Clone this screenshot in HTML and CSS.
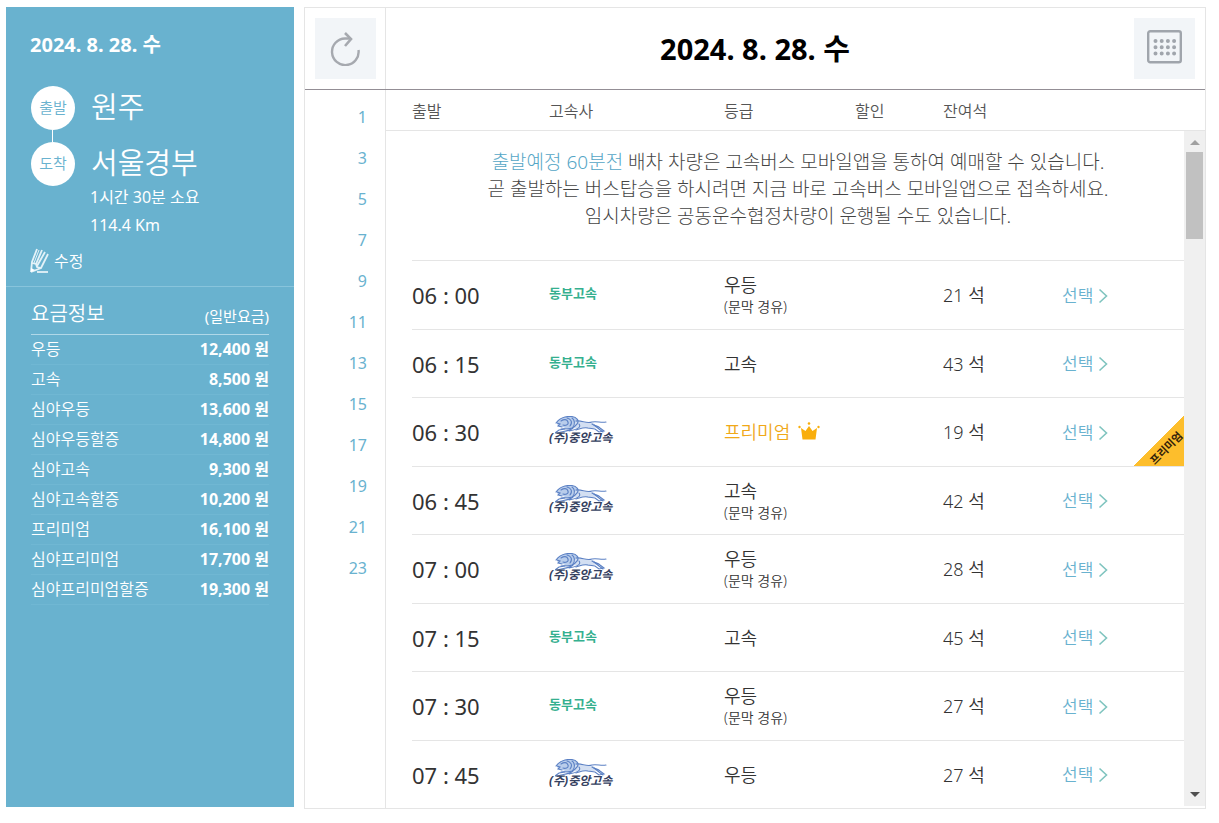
FILE: index.html
```html
<!DOCTYPE html>
<html lang="ko">
<head>
    <meta charset="UTF-8">
    <meta name="viewport" content="width=device-width, initial-scale=1.0">
    <title>고속버스 배차조회</title>
    <link rel="stylesheet" href="styles.css">
</head>
<body>
    <!-- shared icons -->
    <svg class="defs" width="0" height="0">
        <symbol id="chevron" viewBox="0 0 10 16">
            <path d="M1.5 1.5L8.5 8L1.5 14.5" fill="none" stroke="#7fc4bf" stroke-width="1.6"/>
        </symbol>
        <symbol id="lion" viewBox="0 0 52 18">
            <path d="M2 6C4 1 12 0 19 1C23 2 24 6 21 9C18 13 11 13 8 11L4 10L2 8Z" fill="#b9cdeb"/>
            <path d="M19 7C25 4 31 8 38 7L43 11L34 13C28 10 24 13 17 12Z" fill="#d3dff2"/>
            <g fill="none" stroke="#5b80c4" stroke-width="1.1" stroke-linecap="round">
                <path d="M1 7C4 3 6 2 10 1C14 0 20 0 22 3C25 6 21 10 17 12C13 14 9 12 6 13"/>
                <path d="M2 7L5 8L3 10L7 11M6 5C9 3 12 3 13 6S10 10 8 9M12 2C16 3 18 6 15 10M17 2C20 4 20 8 18 11"/>
                <path d="M21 5C27 4 31 8 37 6C42 5 46 7 51 6"/>
                <path d="M37 8C40 10 43 10 45 12L49 15L44 16L40 13L33 12C28 11 25 13 21 14"/>
                <path d="M18 12C13 16 7 15 3 17L0 17L4 14L10 13M24 8C27 12 20 14 14 15"/>
                <path d="M39 9L44 13L48 16"/>
            </g>
        </symbol>
    </svg>

    <div class="wrap">
        <aside class="side">
            <div class="trip">
                <p class="trip-date">2024. 8. 28. 수</p>
                <dl class="route">
                    <dt class="start">출발</dt>
                    <dd>원주</dd>
                    <dt>도착</dt>
                    <dd>서울경부</dd>
                </dl>
                <p class="info">1시간 30분 소요<br>114.4 Km</p>
                <button type="button" class="edit">
                    <svg width="19" height="25" viewBox="0 0 19 25">
                        <g fill="none" stroke="#e4f2f8" stroke-width="1.8">
                            <path d="M1 24L2 14L7 1M1 24L11 20L18 6M2 15L6 16L7 19L11 20M6 16L12 2M7 18L15 4"/>
                            <path d="M4 15L9 2" stroke-width="1"/>
                            <path d="M7 24H18"/>
                        </g>
                        <path d="M1 24L1 20L5 22Z" fill="#fff"/>
                    </svg>
                    <span>수정</span>
                </button>
            </div>
            <table class="fare">
                <thead>
                    <tr><th>요금정보</th><td>(일반요금)</td></tr>
                </thead>
                <tbody>
                    <tr><th>우등</th><td>12,400 원</td></tr>
                    <tr><th>고속</th><td>8,500 원</td></tr>
                    <tr><th>심야우등</th><td>13,600 원</td></tr>
                    <tr><th>심야우등할증</th><td>14,800 원</td></tr>
                    <tr><th>심야고속</th><td>9,300 원</td></tr>
                    <tr><th>심야고속할증</th><td>10,200 원</td></tr>
                    <tr><th>프리미엄</th><td>16,100 원</td></tr>
                    <tr><th>심야프리미엄</th><td>17,700 원</td></tr>
                    <tr><th>심야프리미엄할증</th><td>19,300 원</td></tr>
                </tbody>
            </table>
        </aside>

        <main class="board">
            <header class="top">
                <div class="refresh">
                    <button type="button" class="icon-btn" aria-label="새로고침">
                        <svg width="30" height="34" viewBox="0 0 30 34">
                            <path d="M28.5 18A13.3 13.3 0 1 1 15 6.5H20" fill="none" stroke="#a6a9af" stroke-width="2.4"/>
                            <path d="M15 1L21 7L15 14" fill="none" stroke="#a6a9af" stroke-width="2.6"/>
                        </svg>
                    </button>
                </div>
                <h1>2024. 8. 28. 수</h1>
                <button type="button" class="icon-btn calendar" aria-label="날짜 선택">
                    <svg width="35" height="34" viewBox="0 0 35 34">
                        <rect x="1.2" y="1.2" width="32.6" height="31" rx="2" fill="none" stroke="#a0a5ac" stroke-width="2.4"/>
                        <path d="M8.5 11H28M8.5 17.2H28M8.5 23.4H28" fill="none" stroke="#a0a5ac" stroke-width="4" stroke-linecap="round" stroke-dasharray="0 6.2"/>
                    </svg>
                </button>
            </header>

            <div class="content">
                <nav class="hours">
                    <a href="#">1</a>
                    <a href="#">3</a>
                    <a href="#">5</a>
                    <a href="#">7</a>
                    <a href="#">9</a>
                    <a href="#">11</a>
                    <a href="#">13</a>
                    <a href="#">15</a>
                    <a href="#">17</a>
                    <a href="#">19</a>
                    <a href="#">21</a>
                    <a href="#">23</a>
                </nav>

                <table class="list">
                    <thead>
                        <tr><th>출발</th><th>고속사</th><th>등급</th><th>할인</th><th>잔여석</th><th></th></tr>
                    </thead>
                    <tbody class="notice">
                        <tr>
                            <td colspan="6"><em>출발예정 60분전</em> 배차 차량은 고속버스 모바일앱을 통하여 예매할 수 있습니다.<br>곧 출발하는 버스탑승을 하시려면 지금 바로 고속버스 모바일앱으로 접속하세요.<br>임시차량은 공동운수협정차량이 운행될 수도 있습니다.</td>
                        </tr>
                    </tbody>
                    <tbody class="buses">
                        <tr>
                            <td class="time">06 : 00</td>
                            <td><span class="dongbu">동부고속</span></td>
                            <td>우등<small>(문막 경유)</small></td>
                            <td></td>
                            <td>21 석</td>
                            <td><a href="#">선택<svg width="10" height="16"><use href="#chevron"/></svg></a></td>
                        </tr>
                        <tr>
                            <td class="time">06 : 15</td>
                            <td><span class="dongbu">동부고속</span></td>
                            <td>고속</td>
                            <td></td>
                            <td>43 석</td>
                            <td><a href="#">선택<svg width="10" height="16"><use href="#chevron"/></svg></a></td>
                        </tr>
                        <tr>
                            <td class="time">06 : 30</td>
                            <td><span class="jungang"><svg width="52" height="18"><use href="#lion"/></svg>(주)중앙고속</span></td>
                            <td class="grade">프리미엄
                                <svg width="22" height="18" viewBox="0 0 22 18">
                                    <path d="M3 6L7.5 9L11 4L14.5 9L19 6L17.5 17.5H4.5Z" fill="#f9ae0c"/>
                                    <circle cx="1.5" cy="5" r="1.2" fill="#f9ae0c"/>
                                    <circle cx="11" cy="1.5" r="1.3" fill="#f9ae0c"/>
                                    <circle cx="20.5" cy="5" r="1.2" fill="#f9ae0c"/>
                                </svg>
                            </td>
                            <td></td>
                            <td>19 석</td>
                            <td><a href="#">선택<svg width="10" height="16"><use href="#chevron"/></svg></a><span class="ribbon"><b>프리미엄</b></span></td>
                        </tr>
                        <tr>
                            <td class="time">06 : 45</td>
                            <td><span class="jungang"><svg width="52" height="18"><use href="#lion"/></svg>(주)중앙고속</span></td>
                            <td>고속<small>(문막 경유)</small></td>
                            <td></td>
                            <td>42 석</td>
                            <td><a href="#">선택<svg width="10" height="16"><use href="#chevron"/></svg></a></td>
                        </tr>
                        <tr>
                            <td class="time">07 : 00</td>
                            <td><span class="jungang"><svg width="52" height="18"><use href="#lion"/></svg>(주)중앙고속</span></td>
                            <td>우등<small>(문막 경유)</small></td>
                            <td></td>
                            <td>28 석</td>
                            <td><a href="#">선택<svg width="10" height="16"><use href="#chevron"/></svg></a></td>
                        </tr>
                        <tr>
                            <td class="time">07 : 15</td>
                            <td><span class="dongbu">동부고속</span></td>
                            <td>고속</td>
                            <td></td>
                            <td>45 석</td>
                            <td><a href="#">선택<svg width="10" height="16"><use href="#chevron"/></svg></a></td>
                        </tr>
                        <tr>
                            <td class="time">07 : 30</td>
                            <td><span class="dongbu">동부고속</span></td>
                            <td>우등<small>(문막 경유)</small></td>
                            <td></td>
                            <td>27 석</td>
                            <td><a href="#">선택<svg width="10" height="16"><use href="#chevron"/></svg></a></td>
                        </tr>
                        <tr>
                            <td class="time">07 : 45</td>
                            <td><span class="jungang"><svg width="52" height="18"><use href="#lion"/></svg>(주)중앙고속</span></td>
                            <td>우등</td>
                            <td></td>
                            <td>27 석</td>
                            <td><a href="#">선택<svg width="10" height="16"><use href="#chevron"/></svg></a></td>
                        </tr>
                    </tbody>
                </table>

                <div class="scroll">
                    <div class="bar">
                        <i class="up"></i>
                        <i class="thumb"></i>
                        <i class="down"></i>
                    </div>
                </div>
            </div>
        </main>
    </div>
</body>
</html>
```
FILE: styles.css
```css
* {
    box-sizing: border-box;
}
body {
    margin: 7px 13px 0 6px;
    font-family: "Noto Sans", "Noto Sans CJK KR", sans-serif;
    font-size: 16px;
    color: #333;
    background: #fff;
}
h1, p, dl, dd {
    margin: 0;
}
a {
    color: #69b2cf;
    text-decoration: none;
}
button {
    border: 0;
    padding: 0;
    font: inherit;
    cursor: pointer;
}
table {
    border-collapse: collapse;
}
th {
    font-weight: normal;
    text-align: left;
}
.defs {
    position: absolute;
}
.wrap {
    display: flex;
    gap: 10px;
}

/* left summary */
.side {
    flex: 0 0 288px;
    margin-bottom: 2px;
    color: #fff;
    background: #69b2cf;
}
.trip {
    height: 280px;
    padding: 24px 24px 0;
    border-bottom: 1px solid #88c4dc;
}
.trip-date {
    font-size: 20px;
    line-height: 28px;
    font-weight: bold;
}
.route {
    display: grid;
    grid-template-columns: 44px 1fr;
    column-gap: 16px;
    row-gap: 12px;
    margin-top: 27px;
    padding-left: 1px;
}
.route dt {
    position: relative;
    height: 44px;
    border-radius: 50%;
    line-height: 42px;
    text-align: center;
    font-size: 15px;
    font-weight: 350;
    color: #69b2cf;
    background: #fff;
}
.route .start::after {
    content: "";
    position: absolute;
    left: 21px;
    top: 44px;
    width: 1px;
    height: 12px;
    background: #fff;
}
.route dd {
    font-size: 29px;
    line-height: 42px;
    font-weight: 350;
}
.info {
    margin-top: -3px;
    padding-left: 60px;
    line-height: 28px;
}
.edit {
    display: flex;
    align-items: center;
    gap: 5px;
    margin-top: 9px;
    color: #fff;
    background: none;
    line-height: 24px;
    font-weight: 350;
}
.fare {
    width: 238px;
    margin: 7px 25px 0;
}
.fare thead tr {
    height: 40px;
    border-bottom: 1px solid #b0d8e8;
}
.fare thead th {
    font-size: 20px;
}
.fare thead td {
    padding-top: 4px;
    font-size: 15px;
}
.fare tbody tr {
    height: 30px;
    border-bottom: 1px solid #70b7d3;
}
.fare th {
    font-weight: 350;
}
.fare th, .fare td {
    padding: 0;
    line-height: 24px;
}
.fare td {
    text-align: right;
}
.fare tbody td {
    font-weight: bold;
}

/* right timetable */
.board {
    flex: 1;
    border: 1px solid #e5e5e5;
}
.top {
    display: flex;
    align-items: center;
    height: 82px;
    border-bottom: 1px solid #938e95;
}
.refresh {
    display: flex;
    align-items: center;
    justify-content: center;
    width: 81px;
    height: 81px;
    border-right: 1px solid #e5e5e5;
}
.icon-btn {
    display: flex;
    align-items: center;
    justify-content: center;
    width: 61px;
    height: 61px;
    background: #f2f5f8;
}
.calendar {
    margin-right: 10px;
    padding-bottom: 4px;
}
.top h1 {
    flex: 1;
    padding-right: 10px;
    text-align: center;
    font-size: 29px;
    line-height: 40px;
    color: #000;
}
.content {
    display: flex;
}
.hours {
    width: 81px;
    padding: 7px 18px 0 0;
    border-right: 1px solid #e5e5e5;
    text-align: right;
}
.hours a {
    display: block;
    line-height: 41px;
}
.list {
    display: block;
    flex: 1;
}
.list thead, .list tbody, .notice tr, .notice td {
    display: block;
}
.list thead tr, .buses tr {
    display: grid;
    grid-template-columns: 137px 175px 131px 88px 119px 1fr;
    align-items: center;
}
.list th, .list td {
    padding: 0;
}
.list thead tr {
    height: 41px;
    padding-left: 26px;
    border-bottom: 1px solid #e5e5e5;
}
.list th {
    font-weight: 350;
    color: #555;
}
.list .notice td {
    height: 129px;
    margin-left: 26px;
    padding-top: 18px;
    text-align: center;
    font-size: 19px;
    line-height: 27px;
    font-weight: 300;
    color: #444;
}
.notice em {
    font-style: normal;
    color: #55a6c6;
}
.buses tr {
    position: relative;
    height: 68px;
    margin-left: 26px;
    border-top: 1px solid #e5e5e5;
    font-size: 18px;
    line-height: 24px;
    font-weight: 350;
}
.buses tr:nth-child(odd) {
    height: 69px;
}
.buses .time {
    font-size: 22px;
    font-weight: 400;
}
.buses small {
    display: block;
    font-size: 14px;
    line-height: 20px;
}
.buses a {
    display: inline-flex;
    align-items: center;
    gap: 5px;
    font-size: 17px;
}
.dongbu {
    display: block;
    padding-bottom: 4px;
    font-size: 13px;
    font-weight: bold;
    color: #35b08f;
}
.jungang {
    display: block;
    padding-bottom: 4px;
    font-size: 12px;
    line-height: 12px;
    font-weight: bold;
    font-style: italic;
    color: #35415f;
}
.jungang svg {
    display: block;
    margin: 0 0 -2px 6px;
}
.grade {
    color: #f0a818;
}
.grade svg {
    margin-left: 3px;
    vertical-align: -1px;
}
.ribbon {
    position: absolute;
    right: 0;
    bottom: 0;
    display: flex;
    align-items: center;
    justify-content: center;
    width: 50px;
    height: 50px;
    padding: 14px 0 0 14px;
    background: linear-gradient(135deg, transparent 50%, #fdbe2c 50%);
}
.ribbon b {
    flex: none;
    font-size: 11px;
    line-height: 12px;
    color: #33220a;
    transform: rotate(-45deg);
}
.scroll {
    display: flex;
    width: 21px;
    padding-top: 41px;
    background: linear-gradient(#fff 40px, #e5e5e5 40px, #e5e5e5 41px, #fff 41px);
}
.bar {
    flex: 1;
    display: flex;
    flex-direction: column;
    align-items: center;
    margin-bottom: 2px;
    padding: 9px 0;
    background: #f0f0f0;
}
.up {
    border: 5px solid transparent;
    border-top: 0;
    border-bottom-color: #a0a0a0;
}
.thumb {
    width: 17px;
    height: 87px;
    margin-top: 7px;
    background: #c1c1c1;
}
.down {
    margin-top: auto;
    border: 5px solid transparent;
    border-bottom: 0;
    border-top-color: #505050;
}
```
